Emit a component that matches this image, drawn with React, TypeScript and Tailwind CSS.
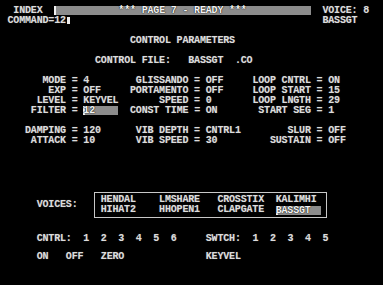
import React from "react";

function cols(parts: [number, string][], start = 0): string {
  let s = "";
  for (const [c, t] of parts) {
    s = s.padEnd(c - start, " ") + t;
  }
  return s;
}

function rl(label: string, end: number): [number, string] {
  return [end - label.length + 1, label];
}

function paramRow(
  a: [string, string],
  b: [string, string],
  c: [string, string]
): string {
  return cols([
    rl(a[0], 10),
    [12, "="],
    [14, a[1]],
    rl(b[0], 31),
    [33, "="],
    [35, b[1]],
    rl(c[0], 52),
    [54, "="],
    [56, c[1]],
  ]);
}

const Line = ({ children }: { children?: React.ReactNode }) => (
  <div className="flex h-[10px] items-center whitespace-pre">{children}</div>
);

const Hl = ({ children, className }: { children: React.ReactNode; className?: string }) => (
  <span
    className={
      "inline-block h-[9px] bg-[#8c8c8c] leading-[9px] text-[#f4f4f4] shadow-[inset_2px_0_0_#f0f0f0] [text-shadow:0_0_1px_#000,0_0_1px_#000] " +
      (className ?? "")
    }
  >
    {children}
  </span>
);

export default function App() {
  const filterAfter = cols(
    [
      rl("CONST TIME", 31),
      [33, "="],
      [35, "ON"],
      rl("START SEG", 52),
      [54, "="],
      [56, "1"],
    ],
    20
  );

  return (
    <div
      className="h-[285px] w-[383px] overflow-hidden bg-black pl-[1.7px] pt-[5px] text-[10px] font-bold tracking-[-0.17px] text-[#dcdcdc] [text-shadow:0_0_1px_rgba(255,255,255,0.35)]"
      style={{ fontFamily: '"Liberation Mono", "DejaVu Sans Mono", monospace' }}
    >
      <Line>
        {"  INDEX  "}
        <Hl className="shadow-[inset_2px_0_0_#f0f0f0,inset_-1px_0_0_#d0d0d0]">
          {"           *** PAGE 7 - READY ***           "}
        </Hl>
        {"  VOICE: 8"}
      </Line>
      <Line>
        {" COMMAND=12"}
        <span className="inline-flex h-[10px] w-[5.83px] items-center">
          <span className="ml-[1px] h-[7px] w-[3px] bg-[#ececec]" />
        </span>
        {cols([[55, "BASSGT"]], 12)}
      </Line>
      <Line />
      <Line>{cols([[22, "CONTROL PARAMETERS"]])}</Line>
      <Line />
      <Line>{cols([[16, "CONTROL FILE:   BASSGT  .CO"]])}</Line>
      <Line />
      <Line>{paramRow(["MODE", "4"], ["GLISSANDO", "OFF"], ["LOOP CNTRL", "ON"])}</Line>
      <Line>{paramRow(["EXP", "OFF"], ["PORTAMENTO", "OFF"], ["LOOP START", "15"])}</Line>
      <Line>{paramRow(["LEVEL", "KEYVEL"], ["SPEED", "0"], ["LOOP LNGTH", "29"])}</Line>
      <Line>
        {"     FILTER = "}
        <Hl>{"12    "}</Hl>
        {filterAfter}
      </Line>
      <Line />
      <Line>{paramRow(["DAMPING", "120"], ["VIB DEPTH", "CNTRL1"], ["SLUR", "OFF"])}</Line>
      <Line>{paramRow(["ATTACK", "10"], ["VIB SPEED", "30"], ["SUSTAIN", "OFF"])}</Line>

      <div className="mt-[47px] flex items-center whitespace-pre">
        <div className="w-[92.3px] leading-[10px]">{"      VOICES:"}</div>
        <div className="w-[233px] border border-[#c8c8c8] pb-[2px] pl-[5.8px] pt-[2px]">
          <div className="grid grid-cols-[58.3px_58.3px_58.3px_1fr] leading-[10px]">
            <div className="h-[10px]">HENDAL</div>
            <div className="h-[10px]">LMSHARE</div>
            <div className="h-[10px]">CROSSTIX</div>
            <div className="h-[10px]">KALIMHI</div>
            <div className="h-[10px]">HIHAT2</div>
            <div className="h-[10px]">HHOPEN1</div>
            <div className="h-[10px]">CLAPGATE</div>
            <div className="flex h-[10px] items-center">
              <Hl className="w-[45px]">BASSGT</Hl>
            </div>
          </div>
        </div>
      </div>

      <div className="mt-[15px]">
        <Line>
          {cols([
            [6, "CNTRL:"],
            [14, "1"],
            [17, "2"],
            [20, "3"],
            [23, "4"],
            [26, "5"],
            [29, "6"],
            [35, "SWTCH:"],
            [43, "1"],
            [46, "2"],
            [49, "3"],
            [52, "4"],
            [55, "5"],
          ])}
        </Line>
      </div>
      <div className="mt-[8px]">
        <Line>
          {cols([
            [6, "ON"],
            [11, "OFF"],
            [17, "ZERO"],
            [35, "KEYVEL"],
          ])}
        </Line>
      </div>
    </div>
  );
}
